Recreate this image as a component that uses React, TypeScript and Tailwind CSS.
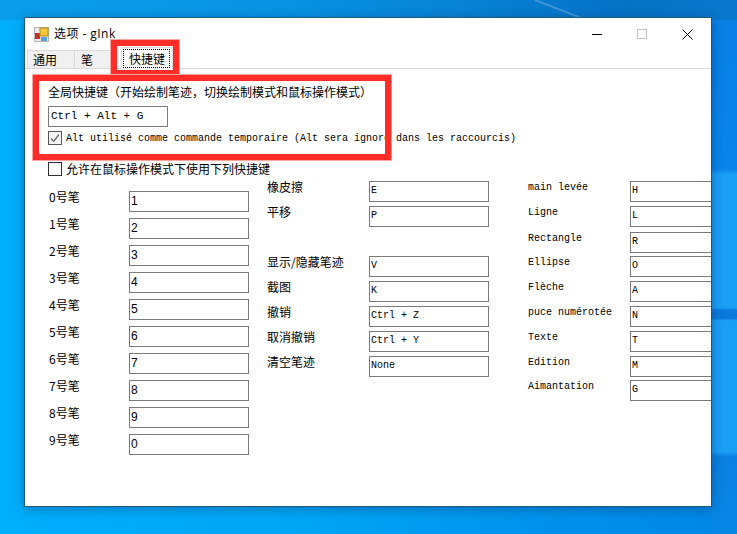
const cjk = 'font-["Noto_Sans_CJK_SC","Noto_Sans",sans-serif]';
const mono = 'font-["Liberation_Mono","Noto_Sans_CJK_SC",monospace]';

const penRows = ['1', '2', '3', '4', '5', '6', '7', '8', '9', '0'];

const middleRows = [
    { label: '橡皮擦', value: 'E', row: 'h-[25px]' },
    { label: '平移', value: 'P', row: 'h-[50px]' },
    { label: '显示/隐藏笔迹', value: 'V', row: 'h-[25px]' },
    { label: '截图', value: 'K', row: 'h-[25px]' },
    { label: '撤销', value: 'Ctrl + Z', row: 'h-[25px]' },
    { label: '取消撤销', value: 'Ctrl + Y', row: 'h-[25px]' },
    { label: '清空笔迹', value: 'None', row: 'h-[25px]' },
];

const toolRows = [
    { label: 'main levée', value: 'H', row: 'h-[25px]' },
    { label: 'Ligne', value: 'L', row: 'h-[26px]' },
    { label: 'Rectangle', value: 'R', row: 'h-[24px]' },
    { label: 'Ellipse', value: 'O', row: 'h-[25px]' },
    { label: 'Flèche', value: 'A', row: 'h-[25px]' },
    { label: 'puce numérotée', value: 'N', row: 'h-[25px]' },
    { label: 'Texte', value: 'T', row: 'h-[25px]' },
    { label: 'Edition', value: 'M', row: 'h-[24px]' },
    { label: 'Aimantation', value: 'G', row: 'h-[25px]' },
];

function KeyBox({ value, font, className = 'w-[120px]' }: { value: string; font: string; className?: string }) {
    return (
        <div className={`h-[21px] shrink-0 border border-[#7a7a7a] bg-white pl-[1px] leading-[18px] text-black ${font} ${className}`}>
            {value}
        </div>
    );
}

function AppIcon() {
    return (
        <svg width="15" height="15" viewBox="0 0 15 15" className="shrink-0">
            <rect x="0.5" y="0.5" width="14" height="14" fill="#ececec" stroke="#b5b5b5" />
            <rect x="1" y="6" width="5" height="6" fill="#c42f25" />
            <rect x="6" y="1" width="8" height="8" fill="#f5c935" stroke="#b58c1c" />
            <rect x="7" y="10" width="6" height="4" fill="#5a9fe0" />
        </svg>
    );
}

export default function App() {
    return (
        <div className="relative h-[534px] w-[737px] overflow-hidden bg-[linear-gradient(90deg,#00aefc_0%,#00a6f6_40%,#0094ec_70%,#0086e4_100%)]">
            {/* Wallpaper, top and right strips */}
            <div className="absolute left-0 top-0 h-[20px] w-full bg-[linear-gradient(90deg,#0a9eea_0%,#0892e2_40%,#0672c6_85%,#0a78cc_100%)]" />
            <svg width="737" height="20" className="absolute left-0 top-0">
                <path d="M535 0L592 22" stroke="#ffffff" strokeOpacity="0.22" strokeWidth="2" fill="none" />
            </svg>
            <div className="absolute left-[712px] top-[20px] h-[514px] w-[25px] bg-[linear-gradient(180deg,#0880e6_0%,#0884ea_29%,#1a9ef6_30%,#1a9ef6_56%,#0a78dc_56.5%,#0a78dc_58%,#1a9ef6_58.5%,#1a9ef6_84%,#0a80e2_85%,#0888e6_100%)]" />

            {/* Dialog window */}
            <div className="absolute left-[24px] top-[17px] flex h-[490px] w-[688px] flex-col overflow-hidden border border-[#1c5a78] bg-white shadow-[0_2px_10px_rgba(0,40,90,0.4)]">
                {/* Title bar */}
                <div className="flex h-[32px] shrink-0 items-center pl-[9px]">
                    <AppIcon />
                    <span className='ml-[5px] mt-[-1px] font-["Open_Sans","Noto_Sans_CJK_SC",sans-serif] text-[12px] tracking-[0.45px] text-black'>选项 - gInk</span>
                    <div className="ml-auto flex items-center gap-[35px] pr-[18px]">
                        <svg width="10" height="10" viewBox="0 0 10 10"><path d="M0 5.5H10" stroke="#000" /></svg>
                        <svg width="10" height="10" viewBox="0 0 10 10"><rect x="0.5" y="0.5" width="9" height="9" fill="none" stroke="#c4c4c4" /></svg>
                        <svg width="11" height="11" viewBox="0 0 11 11"><path d="M0.5 0.5L10.5 10.5M10.5 0.5L0.5 10.5" stroke="#000" /></svg>
                    </div>
                </div>

                {/* Tabs */}
                <div className={`flex h-[19px] shrink-0 items-end border-b border-[#d9d9d9] pl-[2px] text-[12px] leading-[17px] text-black ${cjk}`}>
                    <div className="h-[18px] w-[48px] border-r border-t border-l border-[#d9d9d9] bg-[#f0f0f0] pl-[5px]">通用</div>
                    <div className="h-[18px] w-[36px] border-r border-t border-[#d9d9d9] bg-[#f0f0f0] pl-[6px]">笔</div>
                    <div className="relative ml-[10px] mb-[-1px] h-[22px] w-[52px] border-l border-r border-t border-[#d9d9d9] bg-white pl-[1px] pt-[1px]">
                        <div className="h-[19px] w-[47px] border border-dotted border-black pl-[5px] leading-[17px]">快捷键</div>
                    </div>
                </div>

                {/* Tab page */}
                <div className="flex min-h-0 flex-1 flex-col pl-[23px]">
                    <div className={`mt-[14px] h-[18px] text-[12px] leading-[18px] text-black [text-spacing-trim:space-all] ${cjk}`}>
                        全局快捷键（开始绘制笔迹，切换绘制模式和鼠标操作模式）
                    </div>
                    <KeyBox value="Ctrl + Alt + G" font={`${mono} text-[11px] pl-[2px]`} className="mt-[5px] w-[120px]" />
                    <div className="mt-[4px] flex h-[14px] items-center">
                        <div className="flex h-[14px] w-[14px] items-center justify-center border border-[#555] bg-[#f4f4f4]">
                            <svg width="10" height="10" viewBox="0 0 10 10">
                                <path d="M1 5.5L3.8 8.2L9 1.5" fill="none" stroke="#707070" strokeWidth="1.4" />
                            </svg>
                        </div>
                        <span className={`ml-[4px] whitespace-nowrap text-[10px] text-black ${mono}`}>
                            Alt utilisé comme commande temporaire (Alt sera ignoré dans les raccourcis)
                        </span>
                    </div>
                    <div className="mt-[17px] flex h-[14px] items-center">
                        <div className="h-[14px] w-[14px] border border-[#333] bg-white" />
                        <span className={`ml-[4px] text-[12px] text-black ${cjk}`}>允许在鼠标操作模式下使用下列快捷键</span>
                    </div>

                    {/* Shortcut columns */}
                    <div className="mt-[5px] flex">
                        <div className="mt-[10px] flex w-[219px] shrink-0 flex-col pl-[1px]">
                            {penRows.map((value, i) => (
                                <div key={value} className="flex h-[27px]">
                                    <span className={`w-[80px] text-[12px] leading-[12px] text-black ${cjk}`}>{i}号笔</span>
                                    <KeyBox value={value} font='font-["Liberation_Sans",sans-serif] text-[12px]' />
                                </div>
                            ))}
                        </div>
                        <div className="flex w-[261px] shrink-0 flex-col">
                            {middleRows.map((item) => (
                                <div key={item.label} className={`flex ${item.row}`}>
                                    <span className={`w-[102px] text-[12px] leading-[12px] text-black ${cjk}`}>{item.label}</span>
                                    <KeyBox value={item.value} font={`${mono} text-[10px]`} />
                                </div>
                            ))}
                        </div>
                        <div className="flex shrink-0 flex-col">
                            {toolRows.map((item) => (
                                <div key={item.label} className={`flex ${item.row}`}>
                                    <span className={`w-[102px] pt-[1px] text-[10px] leading-[12px] text-black ${mono}`}>{item.label}</span>
                                    <KeyBox value={item.value} font={`${mono} text-[10px]`} />
                                </div>
                            ))}
                        </div>
                    </div>
                </div>
            </div>

            {/* Red annotation frames */}
            <div className="absolute left-[111px] top-[40px] h-[36px] w-[68px] border-[6px] border-[#ff2d28] shadow-[0_0_0_1px_#ffa5a0]" />
            <div className="absolute left-[33px] top-[75px] h-[85px] w-[358px] border-[6px] border-[#ff2d28] shadow-[0_0_0_1px_#ffa5a0]" />
        </div>
    );
}
